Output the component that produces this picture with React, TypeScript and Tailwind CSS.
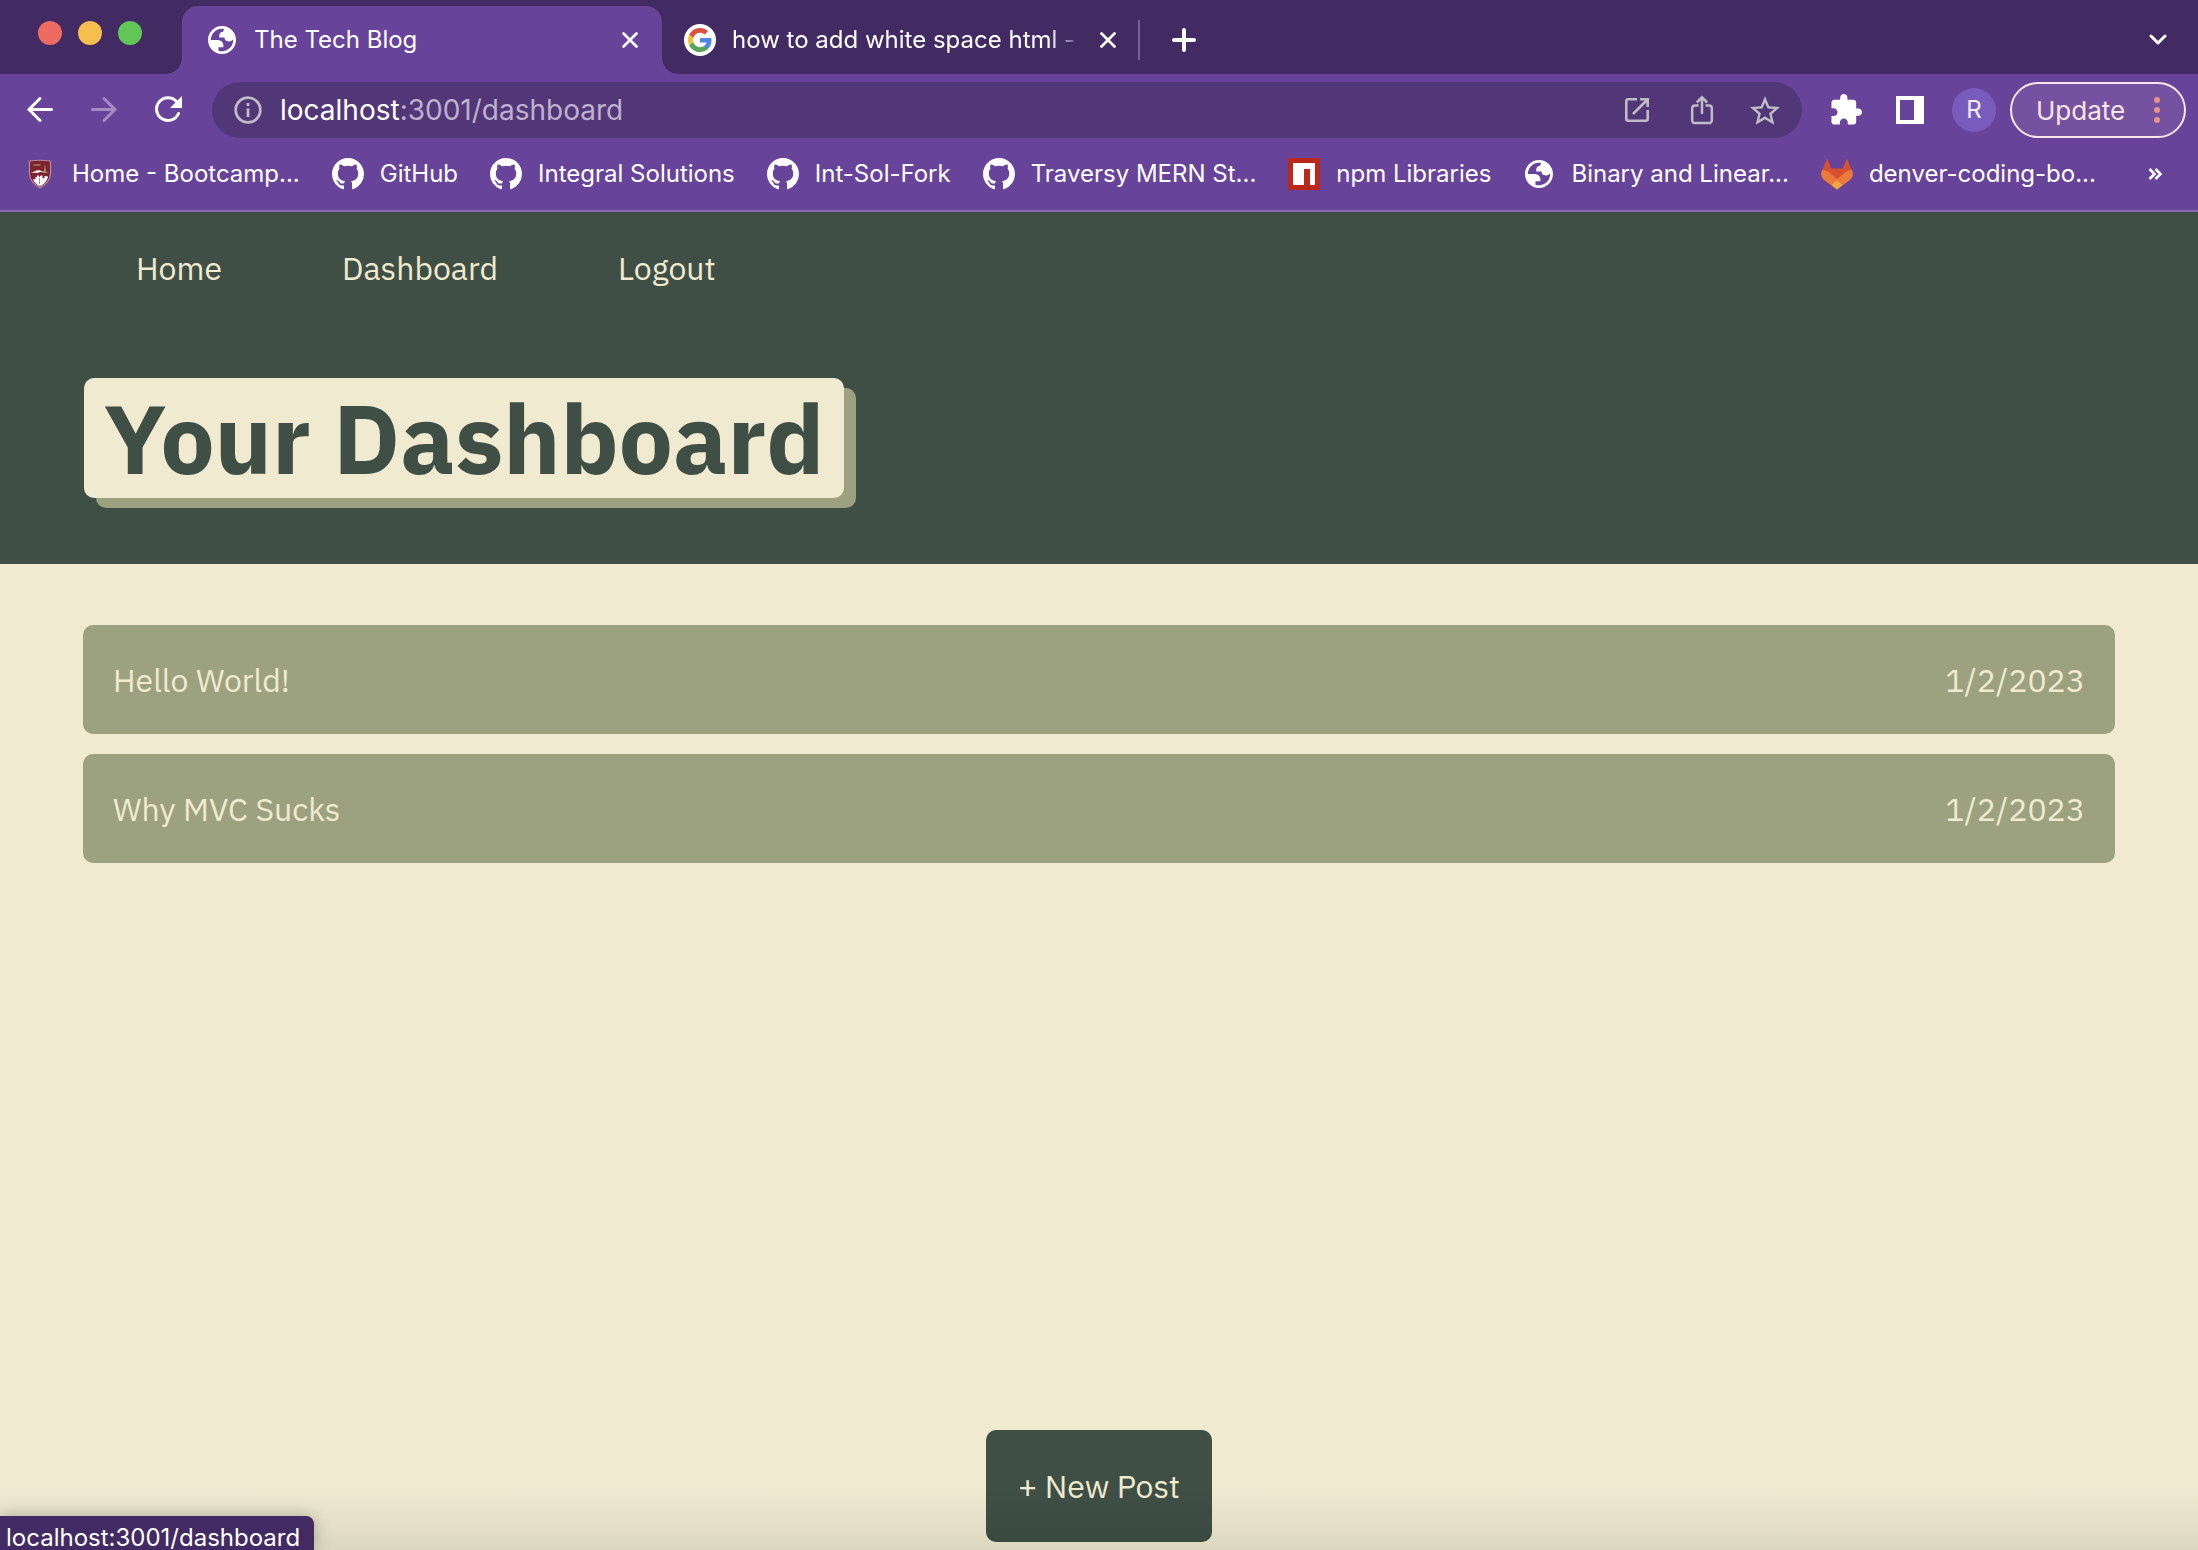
import React from "react";

function Globe() {
  return (
    <svg viewBox="2 2 20 20" className="size-7" fill="currentColor" fillRule="evenodd" aria-hidden="true">
      <path d="M12 2C6.480 2 2 6.480 2 12s4.480 10 10 10 10-4.480 10-10S17.520 2 12 2zM4 12h4.400c3.407.022 4.922 1.730 4.543 5.127H9.488v2.470a8.004 8.004 0 0 0 10.498-8.083C19.327 12.504 18.332 13 17 13c-2.137 0-3.206-.916-3.206-2.750h-3.748c-.274-2.728.683-4.092 2.870-4.092 0-.975.327-1.597.811-1.970A8 8 0 0 0 4 12z" />
    </svg>
  );
}

function GitHub() {
  return (
    <svg viewBox="0 0 16 16" className="size-8" fill="currentColor" aria-hidden="true">
      <path d="M8 0C3.58 0 0 3.58 0 8c0 3.540 2.290 6.530 5.470 7.590.400.070.550-.170.550-.380 0-.190-.010-.820-.010-1.490-2.010.370-2.530-.490-2.690-.940-.090-.230-.480-.940-.820-1.130-.280-.150-.680-.520-.010-.530.630-.010 1.080.580 1.230.820.720 1.210 1.870.870 2.330.660.070-.520.280-.870.510-1.070-1.780-.200-3.640-.890-3.640-3.950 0-.870.310-1.590.820-2.150-.080-.200-.360-1.020.080-2.120 0 0 .670-.210 2.200.820.640-.180 1.320-.270 2-.270s1.360.090 2 .270c1.530-1.040 2.200-.820 2.200-.820.440 1.100.160 1.920.080 2.120.510.560.820 1.270.820 2.150 0 3.070-1.870 3.750-3.650 3.950.290.250.540.730.540 1.480 0 1.070-.010 1.930-.010 2.200 0 .210.150.460.550.380A8.010 8.010 0 0 0 16 8c0-4.420-3.580-8-8-8z" />
    </svg>
  );
}

function Shield() {
  return (
    <svg viewBox="0 0 24 30" className="h-[30px] w-6" aria-hidden="true">
      <path d="M1.500 2Q12 .500 22.500 2V15c0 6-4 10-10.500 14C5.500 25 1.500 21 1.500 15z" fill="#7d2230" stroke="#b98a96" strokeWidth="1.200" />
      <path d="M3 14l5-2.500 3-.500 3.500 1.500L21 13.500l-5 0-3.500-.500-3 1-3.500-.300z" fill="#f3e9ea" />
      <path d="M17 5l1.300 9h-2.600z" fill="#a39a5c" />
      <path d="M5.500 6h7" stroke="#a07a50" strokeWidth="1.600" />
      <path d="M5 20.500l2.500-.500v-2l1.500 0v-1.500h2v2l2-2h1.500v3l2-.500v-2l3.500.500c-.500 4-3 6.800-8 10-4-2.300-6-4.500-7-7z" fill="#fff" />
      <path d="M11.500 19v6" stroke="#b98a96" strokeWidth="1" />
    </svg>
  );
}

function Npm() {
  return (
    <svg viewBox="0 0 32 32" className="size-8" aria-hidden="true">
      <path d="M0 0h32v32H0z" fill="#bb2718" />
      <path d="M5 5h22v22h-5V11h-6v16H5z" fill="#fff" />
    </svg>
  );
}

function GitLab() {
  return (
    <svg viewBox="0 0 32 32" className="size-8" aria-hidden="true">
      <path d="M6 .500 10.300 10.500h11.400L26 .500 30.500 12 16 25 1.500 12z" fill="#d75030" />
      <path d="M1.500 11.500q5.500 1.500 9.500 5.500l5 4 5-4q4-4 9.500-5.500 3.500 6-1.500 10.500L16 31.500 3 22q-5-4.500-1.500-10.500z" fill="#ec7a3a" />
      <path d="M16 22.500l5.500 4.500-5.500 4.500-5.500-4.500z" fill="#f2a944" />
    </svg>
  );
}

function Google() {
  return (
    <svg viewBox="0 0 32 32" className="size-8 shrink-0" aria-hidden="true">
      <circle cx="16" cy="16" r="16" fill="#fff" />
      <g transform="translate(4 4)">
        <path fill="#4f86ec" d="M23.500 12.270c0-.790-.070-1.540-.190-2.270H12v4.510h6.470c-.290 1.480-1.140 2.730-2.400 3.580v3h3.860c2.260-2.090 3.570-5.170 3.570-8.820z" />
        <path fill="#58a55c" d="M12 24c3.240 0 5.950-1.080 7.930-2.910l-3.860-3c-1.080.720-2.450 1.160-4.070 1.160-3.130 0-5.780-2.110-6.730-4.960H1.290v3.090C3.260 21.300 7.310 24 12 24z" />
        <path fill="#f2bd42" d="M5.270 14.290c-.250-.720-.380-1.490-.380-2.290s.140-1.570.380-2.290V6.620H1.290C.470 8.240 0 10.060 0 12s.470 3.760 1.290 5.380z" />
        <path fill="#d85140" d="M12 4.750c1.770 0 3.350.610 4.600 1.800l3.420-3.420C17.950 1.190 15.240 0 12 0 7.310 0 3.260 2.700 1.290 6.620l3.980 3.090C6.220 6.860 8.870 4.750 12 4.750z" />
      </g>
    </svg>
  );
}

function Cross() {
  return (
    <svg viewBox="0 0 16 16" className="size-4" fill="none" stroke="currentColor" strokeWidth="2.700" strokeLinecap="round" aria-hidden="true">
      <path d="M1.500 1.500l13 13M14.500 1.500l-13 13" />
    </svg>
  );
}

function TabStrip() {
  return (
    <div className="flex h-[74px] items-end bg-[#422a63] text-white">
      <div className="flex w-[182px] shrink-0 gap-4 self-start pt-[21px] pl-[38px]">
        <button aria-label="Close window" className="size-6 rounded-full bg-[#ed6b60]" />
        <button aria-label="Minimize window" className="size-6 rounded-full bg-[#f5be4f]" />
        <button aria-label="Zoom window" className="size-6 rounded-full bg-[#62c656]" />
      </div>
      <div className="relative flex h-[68px] w-[480px] shrink-0 items-center rounded-t-2xl bg-[#68439a] pr-6 pl-[26px]">
        <span className="absolute bottom-0 -left-4 size-4 bg-[radial-gradient(circle_at_0_0,transparent_15.5px,#68439a_16px)]" />
        <span className="absolute -right-4 bottom-0 size-4 bg-[radial-gradient(circle_at_100%_0,transparent_15.5px,#68439a_16px)]" />
        <Globe />
        <span className="ml-[18px] flex-1 text-2xl">The Tech Blog</span>
        <button aria-label="Close The Tech Blog"><Cross /></button>
      </div>
      <div className="flex h-[68px] w-[476px] shrink-0 items-center pr-[22px] pl-[22px]">
        <Google />
        <span className="mr-4 ml-4 flex-1 text-2xl whitespace-nowrap [mask-image:linear-gradient(to_right,#000_90%,transparent)]">
          how to add white space html -
        </span>
        <button aria-label="Close search tab"><Cross /></button>
      </div>
      <div className="flex h-[68px] flex-1 items-center">
        <span className="h-10 w-0.5 bg-[#776392]" />
        <button aria-label="New tab" className="ml-8">
          <svg viewBox="0 0 24 24" className="size-6" stroke="currentColor" strokeWidth="4" strokeLinecap="round" aria-hidden="true">
            <path d="M12 2v20M2 12h20" />
          </svg>
        </button>
        <button aria-label="Search tabs" className="mr-[31px] ml-auto">
          <svg viewBox="0 0 18 12" className="h-3 w-[18px]" fill="none" stroke="currentColor" strokeWidth="3" strokeLinecap="round" strokeLinejoin="round" aria-hidden="true">
            <path d="M2 2l7 7 7-7" />
          </svg>
        </button>
      </div>
    </div>
  );
}

function Toolbar() {
  return (
    <div className="flex h-[72px] items-center bg-[#68439a] pr-3 pl-[26px] text-white">
      <button aria-label="Back" className="mr-9">
        <svg viewBox="0 0 28 28" className="size-7" fill="none" stroke="currentColor" strokeWidth="3" strokeLinecap="round" aria-hidden="true">
          <path d="M25.500 13.500H3M14 2.500 3 13.500l11 11" />
        </svg>
      </button>
      <button aria-label="Forward" className="mr-9 text-[#a48cc2]">
        <svg viewBox="0 0 28 28" className="size-7" fill="none" stroke="currentColor" strokeWidth="3" strokeLinecap="round" aria-hidden="true">
          <path d="M2.500 13.500H25M14 2.500l11 11-11 11" />
        </svg>
      </button>
      <button aria-label="Reload" className="mr-[30px]">
        <svg viewBox="0 0 28 28" className="size-7" fill="none" stroke="currentColor" strokeWidth="3" aria-hidden="true">
          <path d="M22.500 5.500A11.400 11.400 0 1 0 24.500 17.500" strokeLinecap="round" />
          <path d="M28 0v12H16z" fill="currentColor" stroke="none" />
        </svg>
      </button>
      <div className="flex h-14 min-w-0 flex-1 items-center rounded-full bg-[#523778] pr-[22px] pl-[22px] text-[#c0bcc4]">
        <svg viewBox="0 0 28 28" className="size-7" fill="none" stroke="currentColor" strokeWidth="2.800" aria-hidden="true">
          <circle cx="14" cy="14" r="12.300" />
          <path d="M14 12.500V21M14 7v3" />
        </svg>
        <div className="ml-[18px] flex-1 text-[28px] text-[#beb0ce]">
          <span className="text-white">localhost</span>:3001/dashboard
        </div>
        <button aria-label="Open in app" className="mr-10">
          <svg viewBox="0 0 26 26" className="size-[26px]" fill="none" stroke="currentColor" strokeWidth="2.600" aria-hidden="true">
            <path d="M13 2.300H4.300a2 2 0 0 0-2 2v17.400a2 2 0 0 0 2 2h17.400a2 2 0 0 0 2-2V13M16 2.300h7.700V10M23.500 2.500 9 17" />
          </svg>
        </button>
        <button aria-label="Share" className="mr-9">
          <svg viewBox="0 0 24 30" className="h-[30px] w-6" fill="none" stroke="currentColor" strokeWidth="2.500" aria-hidden="true">
            <path d="M8.500 10.500H5A2.800 2.800 0 0 0 2.200 13.300v12A2.800 2.800 0 0 0 5 28.100h14a2.800 2.800 0 0 0 2.800-2.800v-12A2.800 2.800 0 0 0 19 10.500h-3.500M12 19V2.500M6.800 7.500 12 2.300l5.200 5.200" />
          </svg>
        </button>
        <button aria-label="Bookmark this page">
          <svg viewBox="2 2 20 19" className="h-[29px] w-[30px]" fill="currentColor" aria-hidden="true">
            <path d="M22 9.240l-7.190-.620L12 2 9.190 8.630 2 9.240l5.460 4.730L5.820 21 12 17.270 18.180 21l-1.630-7.030L22 9.240zM12 15.400l-3.760 2.270 1-4.280-3.320-2.880 4.380-.380L12 6.100l1.710 4.040 4.380.380-3.320 2.880 1 4.280L12 15.400z" />
          </svg>
        </button>
      </div>
      <button aria-label="Extensions" className="ml-7">
        <svg viewBox="1 1 22 22" className="size-8" fill="currentColor" aria-hidden="true">
          <path d="M20.500 11H19V7c0-1.100-.900-2-2-2h-4V3.500C13 2.120 11.880 1 10.500 1S8 2.120 8 3.500V5H4c-1.100 0-1.990.900-1.990 2v3.800H3.500c1.490 0 2.700 1.210 2.700 2.700s-1.210 2.700-2.700 2.700H2V20c0 1.100.900 2 2 2h3.800v-1.500c0-1.490 1.210-2.700 2.700-2.700 1.490 0 2.700 1.210 2.700 2.700V22H17c1.100 0 2-.900 2-2v-4h1.500c1.380 0 2.500-1.120 2.500-2.500S21.880 11 20.500 11z" />
        </svg>
      </button>
      <button aria-label="Side panel" className="ml-[34px]">
        <svg viewBox="0 0 28 28" className="size-7" aria-hidden="true">
          <path d="M0 0h28v28H0zM4 4v20h14V4z" fill="currentColor" fillRule="evenodd" />
        </svg>
      </button>
      <button aria-label="Profile" className="ml-7 size-11 rounded-full bg-[#795abd] text-2xl text-[#f3eefa]">R</button>
      <button className="ml-[14px] flex h-14 w-44 items-center justify-between rounded-full border-2 border-[#fae6e6] bg-[#7551a1] pr-6 pl-6 text-[26px] text-[#fae6e6]">
        Update
        <svg viewBox="0 0 6 26" className="h-[26px] w-1.5" fill="#e8928a" aria-hidden="true">
          <circle cx="3" cy="3" r="3" />
          <circle cx="3" cy="13" r="3" />
          <circle cx="3" cy="23" r="3" />
        </svg>
      </button>
    </div>
  );
}

const bookmarks = [
  { label: "Home - Bootcamp...", icon: <Shield /> },
  { label: "GitHub", icon: <GitHub /> },
  { label: "Integral Solutions", icon: <GitHub /> },
  { label: "Int-Sol-Fork", icon: <GitHub /> },
  { label: "Traversy MERN St...", icon: <GitHub /> },
  { label: "npm Libraries", icon: <Npm /> },
  { label: "Binary and Linear...", icon: <Globe /> },
  { label: "denver-coding-bo...", icon: <GitLab /> },
];

function Bookmarks() {
  return (
    <nav aria-label="Bookmarks" className="flex h-[66px] items-start gap-8 border-b-2 border-[#8b68b2] bg-[#68439a] px-6 pt-3 text-2xl text-white">
      {bookmarks.map((b) => (
        <a key={b.label} href="#" className="flex h-8 items-center gap-4 whitespace-nowrap">
          <span className="flex w-8 justify-center">{b.icon}</span>
          {b.label}
        </a>
      ))}
      <button aria-label="More bookmarks" className="mt-2.5 mr-3 ml-auto">
        <svg viewBox="0 0 14 12" className="h-3 w-3.5" fill="none" stroke="currentColor" strokeWidth="2.600" aria-hidden="true">
          <path d="M1.500 1l5 5-5 5M7.500 1l5 5-5 5" />
        </svg>
      </button>
    </nav>
  );
}

const posts = [
  { title: "Hello World!", date: "1/2/2023" },
  { title: "Why MVC Sucks", date: "1/2/2023" },
];

export default function App() {
  return (
    <div className="flex min-h-screen flex-col bg-[#efead0] font-[Inter,sans-serif]">
      <TabStrip />
      <Toolbar />
      <Bookmarks />
      <div className="relative flex flex-1 flex-col font-['IBM_Plex_Sans',Roboto,sans-serif] text-[32px] text-[#efead0]">
        <header className="h-[352px] bg-[#3f4f45] px-[84px] pt-8">
          <nav aria-label="Main" className="flex h-12 items-center gap-[120px] px-[52px]">
            <a href="#">Home</a>
            <a href="#">Dashboard</a>
            <a href="#">Logout</a>
          </nav>
          <h1 className="mt-[86px] flex h-[120px] w-fit items-center rounded-[10px] bg-[#efead0] px-5 text-[96px] leading-none font-bold text-[#3f4f45] shadow-[12px_10px_0_#9ca17f]">
            Your Dashboard
          </h1>
        </header>
        <main className="flex flex-1 flex-col px-[83px] pt-[61px]">
          <ul className="flex flex-col gap-5">
            {posts.map((p) => (
              <li key={p.title}>
                <a href="#" className="flex h-[109px] items-center justify-between rounded-[10px] bg-[#9ca17f] px-[30px]">
                  <span>{p.title}</span>
                  <span>{p.date}</span>
                </a>
              </li>
            ))}
          </ul>
          <button className="mx-auto mt-auto mb-2 h-28 w-[226px] rounded-[10px] bg-[#3f4f45]">+ New Post</button>
        </main>
        <div className="pointer-events-none absolute inset-x-0 bottom-0 h-16 bg-linear-to-t from-black/8 to-transparent" />
        <div className="absolute bottom-0 left-0 h-[34px] w-[314px] rounded-tr-lg bg-[#422a63] pl-1.5 font-[Inter,sans-serif] text-2xl leading-[44px] text-white shadow-[0_0_16px_rgba(0,0,0,0.25)]">
          localhost:3001/dashboard
        </div>
      </div>
    </div>
  );
}
